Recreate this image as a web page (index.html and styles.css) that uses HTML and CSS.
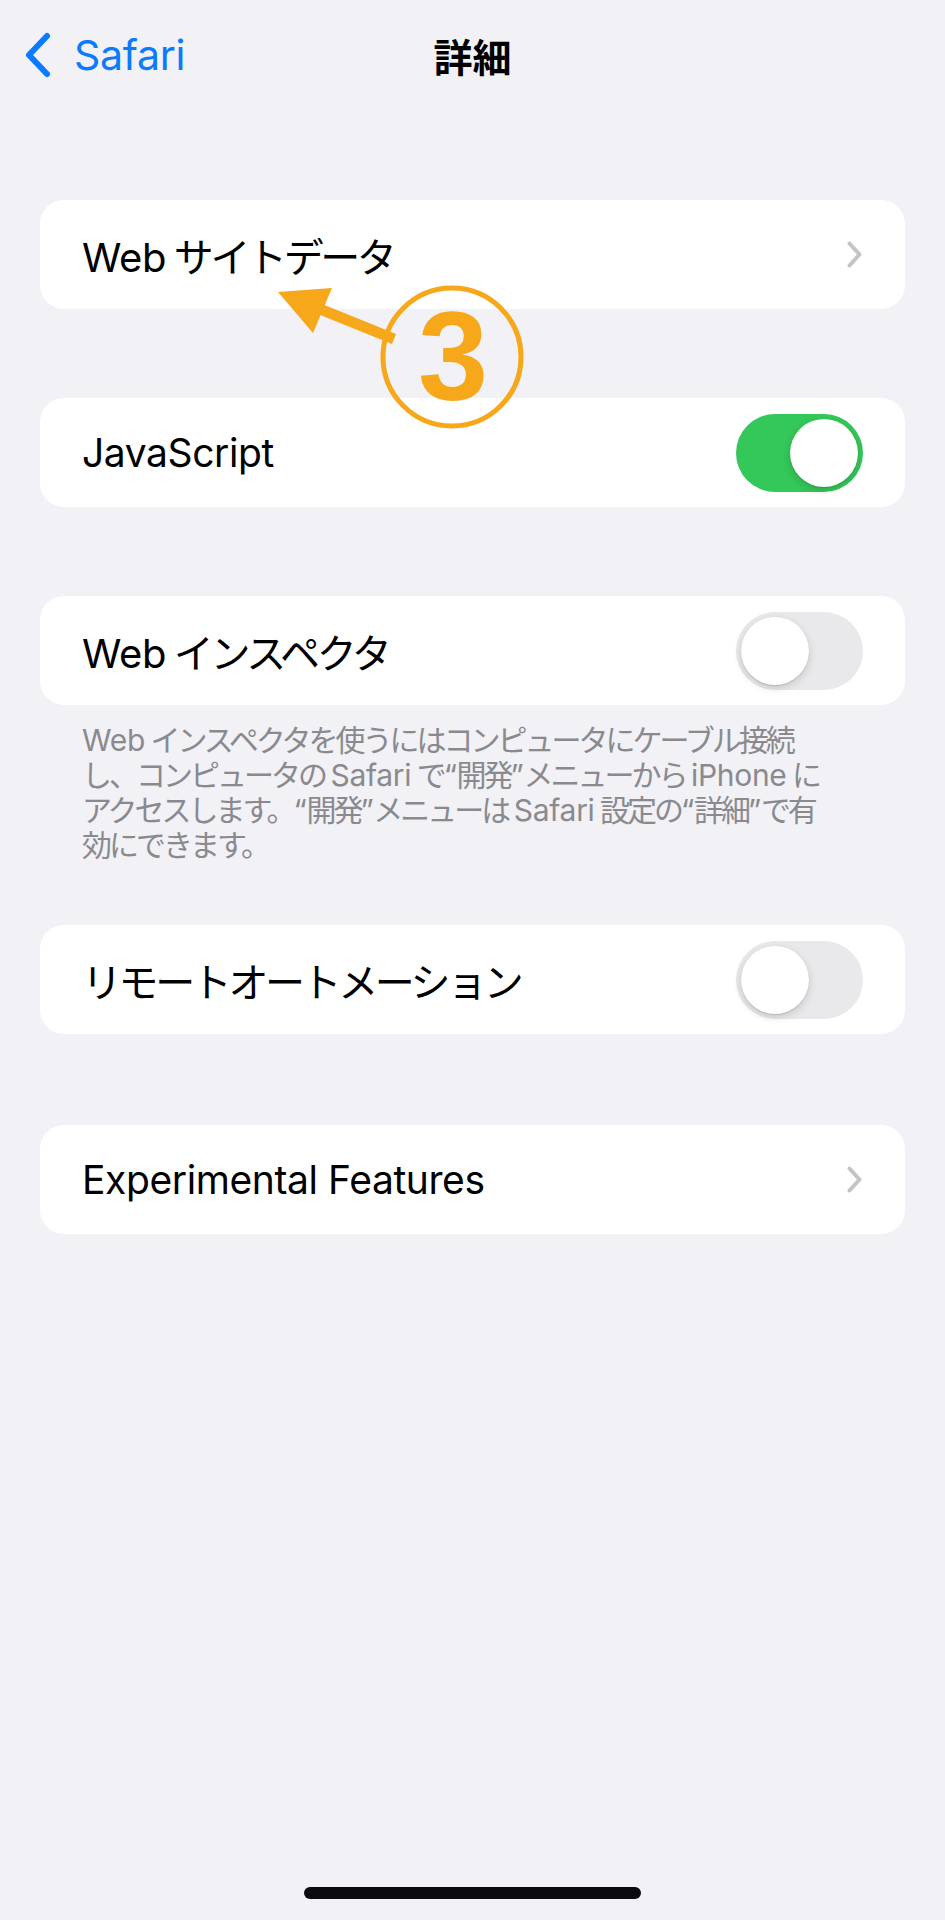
FILE: index.html
```html
<!DOCTYPE html>
<html lang="ja">
<head>
  <meta charset="UTF-8" />
  <meta name="viewport" content="width=device-width, initial-scale=1.0"/>
  <title>詳細 - Safari</title>
  <link rel="stylesheet" href="styles.css">
</head>
<body>
  <div class="screen">
    <header class="nav">
      <a class="back" href="#">
        <svg class="back-icon" viewBox="0 0 29 46" width="29" height="46">
          <path d="M24 4 L6 23 L24 42" />
        </svg>
        <span>Safari</span>
      </a>
      <h1 class="nav-title">詳細</h1>
      <div></div>
    </header>

    <main class="settings">
      <section class="group">
        <div class="row">
          <span class="label jp"><span class="en">Web</span> サイトデータ</span>
          <svg class="chevron" viewBox="0 0 15 27" width="15" height="27">
            <path d="M2.5 2.5 L12.5 13.5 L2.5 24.5" />
          </svg>
        </div>
      </section>

      <section class="group">
        <div class="row">
          <span class="label">JavaScript</span>
          <span class="toggle on"><span class="knob"></span></span>
        </div>
      </section>

      <section class="group">
        <div class="row">
          <span class="label jp"><span class="en">Web</span> インスペクタ</span>
          <span class="toggle"><span class="knob"></span></span>
        </div>
        <p class="footer jp">
          <span class="en">Web</span> インスペクタを使うにはコンピュータにケーブル接続<br>
          し、コンピュータの <span class="en">Safari</span> で<span class="en">“</span>開発<span class="en">”</span>メニューから <span class="en">iPhone</span> に<br>
          アクセスします。<span class="en">“</span>開発<span class="en">”</span>メニューは <span class="en">Safari</span> 設定の<span class="en">“</span>詳細<span class="en">”</span>で有<br>
          効にできます。
        </p>
      </section>

      <section class="group group-after-footer">
        <div class="row">
          <span class="label jp">リモートオートメーション</span>
          <span class="toggle"><span class="knob"></span></span>
        </div>
      </section>

      <section class="group group-last">
        <div class="row">
          <span class="label">Experimental Features</span>
          <svg class="chevron" viewBox="0 0 15 27" width="15" height="27">
            <path d="M2.5 2.5 L12.5 13.5 L2.5 24.5" />
          </svg>
        </div>
      </section>
    </main>

    <div class="home-bar"></div>

    <!-- step marker drawn over the list -->
    <svg class="annotation" viewBox="0 0 265 155" width="265" height="155">
      <line x1="40" y1="25" x2="124" y2="59" class="arrow-shaft" />
      <polygon points="8,12 62,8 43,53" class="arrow-head" />
      <circle cx="182" cy="77" r="69" class="step-ring" />
      <text x="183" y="120" class="step-num">3</text>
    </svg>
  </div>
</body>
</html>
```

FILE: styles.css
```css
* {
  box-sizing: border-box;
}

body {
  margin: 0;
  font-family: 'Inter', 'Noto Sans CJK JP', sans-serif;
  background-color: #f1f1f6;
  color: #000;
}

.screen {
  position: relative;
  width: 945px;
  min-height: 1920px;
  display: flex;
  flex-direction: column;
}

/* navigation bar */
.nav {
  height: 110px;
  display: grid;
  grid-template-columns: 1fr auto 1fr;
  align-items: center;
}

.back {
  display: flex;
  align-items: center;
  gap: 22px;
  padding-left: 23px;
  color: #0a7aff;
  text-decoration: none;
  font-size: 41px;
  letter-spacing: -0.3px;
}

.back-icon path {
  fill: none;
  stroke: #0a7aff;
  stroke-width: 6;
  stroke-linecap: round;
  stroke-linejoin: round;
}

.nav-title {
  margin: 0;
  font-size: 39px;
  font-weight: 700;
  font-family: 'Noto Sans CJK JP', sans-serif;
}

/* grouped list */
.settings {
  padding: 0 40px;
  margin-top: 90px;
}

.group + .group {
  margin-top: 89px;
}

.group + .group-after-footer {
  margin-top: 62px;
}

.group + .group-last {
  margin-top: 91px;
}

.row {
  height: 109px;
  padding: 0 42px;
  display: flex;
  align-items: center;
  justify-content: space-between;
  background: #fff;
  border-radius: 24px;
}

.label {
  font-size: 39px;
  letter-spacing: -0.4px;
}

.label.jp {
  font-size: 40px;
}

.jp {
  letter-spacing: -0.085em;
}

.jp .en {
  letter-spacing: -0.01em;
}

.chevron {
  margin-right: 1px;
}

.chevron path {
  fill: none;
  stroke: #c4c4c8;
  stroke-width: 4;
  stroke-linecap: round;
  stroke-linejoin: round;
}

.toggle {
  width: 127px;
  height: 78px;
  padding: 5px;
  border-radius: 39px;
  background: #e9e9eb;
  display: flex;
  justify-content: flex-start;
}

.toggle.on {
  background: #34c759;
  justify-content: flex-end;
}

.knob {
  width: 68px;
  height: 68px;
  border-radius: 50%;
  background: #fff;
  box-shadow: 0 3px 8px rgba(0,0,0,0.15), 0 1px 1px rgba(0,0,0,0.12);
}

.footer {
  margin: 0;
  padding: 18px 42px 0;
  font-size: 30px;
  line-height: 35px;
  color: #8a8a8e;
  white-space: nowrap;
}

.footer.jp {
  letter-spacing: -0.1em;
}

.home-bar {
  width: 337px;
  height: 12px;
  margin: auto auto 21px;
  border-radius: 6px;
  background: #0a0a0f;
}

/* orange step marker */
.annotation {
  position: absolute;
  left: 270px;
  top: 280px;
}

.arrow-shaft {
  stroke: #f7a71a;
  stroke-width: 11;
}

.arrow-head {
  fill: #f7a71a;
}

.step-ring {
  fill: none;
  stroke: #f7a71a;
  stroke-width: 5;
}

.step-num {
  fill: #f7a71a;
  font-family: 'Liberation Sans', sans-serif;
  font-weight: 700;
  font-size: 126px;
  text-anchor: middle;
}
```
